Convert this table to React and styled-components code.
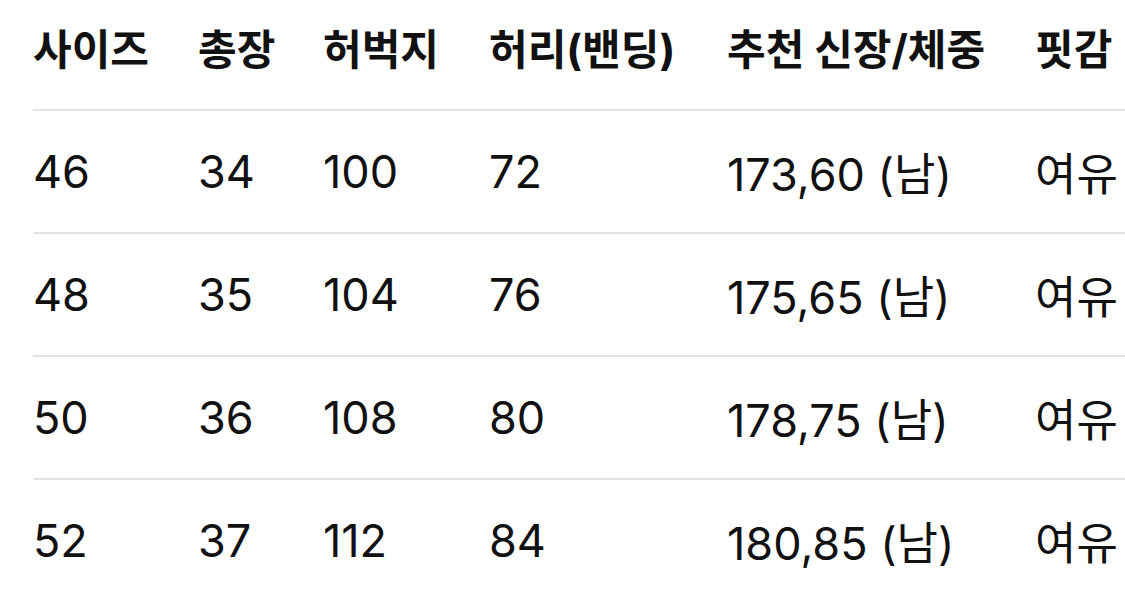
import styled, { createGlobalStyle } from "styled-components";

const GlobalStyle = createGlobalStyle`
  html, body {
    margin: 0;
    padding: 0;
    background: #ffffff;
  }
  body {
    font-family: Inter, "Noto Sans CJK KR", "Noto Sans", sans-serif;
    color: #111111;
    overflow: hidden;
  }
`;

const headers = ["사이즈", "총장", "허벅지", "허리(밴딩)", "추천 신장/체중", "핏감"];

const rows = [
  ["46", "34", "100", "72", "173,60 (남)", "여유"],
  ["48", "35", "104", "76", "175,65 (남)", "여유"],
  ["50", "36", "108", "80", "178,75 (남)", "여유"],
  ["52", "37", "112", "84", "180,85 (남)", "여유"],
];

export default function App() {
  return (
    <>
      <GlobalStyle />
      <Page>
        <SizeTable>
          <HeaderRow>
            {headers.map((label) => (
              <HeaderCell key={label}>{label}</HeaderCell>
            ))}
          </HeaderRow>
          {rows.map((row, index) => (
            <BodyRow key={row[0]} $last={index === rows.length - 1}>
              {row.map((value, i) => (
                <BodyCell key={i}>{value}</BodyCell>
              ))}
            </BodyRow>
          ))}
        </SizeTable>
      </Page>
    </>
  );
}

const Page = styled.main`
  width: 1125px;
  height: 597px;
  padding-left: 33px;
  box-sizing: border-box;
  overflow: hidden;
`;

const SizeTable = styled.div`
  display: flex;
  flex-direction: column;
  width: 1092px;
`;

const Row = styled.div`
  display: grid;
  grid-template-columns: 165px 125px 166px 238px 308px 1fr;
  align-items: center;
  border-bottom: 2px solid #e3e3e3;
  box-sizing: border-box;
`;

const HeaderRow = styled(Row)`
  height: 111px;
  padding-bottom: 16px;
`;

const BodyRow = styled(Row)`
  height: 123px;
  border-bottom-color: ${(props) => (props.$last ? "transparent" : "#e3e3e3")};
`;

const HeaderCell = styled.div`
  font-size: 42px;
  font-weight: 700;
  letter-spacing: 0;
  white-space: nowrap;
`;

const BodyCell = styled.div`
  font-size: 45px;
  font-weight: 400;
  white-space: nowrap;
`;
